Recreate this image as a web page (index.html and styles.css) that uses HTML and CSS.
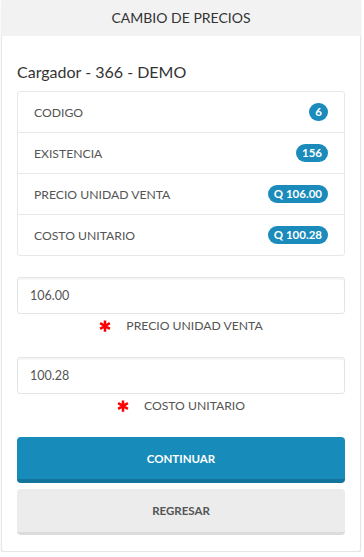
FILE: index.html
```html
<!DOCTYPE html>
<html lang="es">
  <head>
    <meta charset="UTF-8" />
    <meta name="viewport" content="width=device-width, initial-scale=1.0" />
    <title>Cambio de precios</title>
    <link rel="stylesheet" href="styles.css">
  </head>
  <body>
    <div class="panel">
      <div class="panel-heading">CAMBIO DE PRECIOS</div>
      <div class="panel-body">
        <h2 class="product-title">Cargador - 366 - DEMO</h2>

        <ul class="list-group">
          <li class="list-item">
            <span>CODIGO</span>
            <span class="badge">6</span>
          </li>
          <li class="list-item">
            <span>EXISTENCIA</span>
            <span class="badge">156</span>
          </li>
          <li class="list-item">
            <span>PRECIO UNIDAD VENTA</span>
            <span class="badge">Q 106.00</span>
          </li>
          <li class="list-item">
            <span>COSTO UNITARIO</span>
            <span class="badge">Q 100.28</span>
          </li>
        </ul>

        <div class="field">
          <input class="form-control" type="text" value="106.00">
          <label class="field-label">
            <svg class="required" viewBox="0 0 16 16" width="12" height="12">
              <path d="M8 0.5v15M1.5 4.2l13 7.6M1.5 11.8l13-7.6" stroke="#ff0000" stroke-width="3.4" fill="none"/>
            </svg>
            PRECIO UNIDAD VENTA
          </label>
        </div>

        <div class="field">
          <input class="form-control" type="text" value="100.28">
          <label class="field-label">
            <svg class="required" viewBox="0 0 16 16" width="12" height="12">
              <path d="M8 0.5v15M1.5 4.2l13 7.6M1.5 11.8l13-7.6" stroke="#ff0000" stroke-width="3.4" fill="none"/>
            </svg>
            COSTO UNITARIO
          </label>
        </div>

        <button class="btn btn-primary" type="button">CONTINUAR</button>
        <button class="btn btn-default" type="button">REGRESAR</button>
      </div>
    </div>
  </body>
</html>
```

FILE: styles.css
```css
body {
  margin: 0;
  padding: 0 3px 0 1px;
  background: #ffffff;
  font-family: Lato, "Noto Sans", sans-serif;
  color: #444;
}

.panel {
  border: 1px solid #e6e6e6;
  border-top: 0;
  border-radius: 0 0 3px 3px;
  box-shadow: 0 2px 2px rgba(0, 0, 0, 0.08);
  background: #fff;
}

.panel-heading {
  height: 36px;
  line-height: 36px;
  margin: 0 -1px;
  background: #f2f2f2;
  text-align: center;
  font-size: 14px;
  color: #333;
}

.panel-body {
  padding: 18px 15px 16px;
}

.product-title {
  margin: 8px 0 10px;
  font-size: 16px;
  font-weight: 400;
  color: #333;
}

.list-group {
  list-style: none;
  margin: 0 0 21px;
  padding: 0;
  border: 1px solid #e8e8e8;
  border-radius: 3px;
}

.list-item {
  display: flex;
  align-items: center;
  justify-content: space-between;
  height: 40px;
  padding: 0 16px;
  font-size: 12.2px;
  color: #555;
}

.list-item + .list-item {
  border-top: 1px solid #e8e8e8;
}

.badge {
  display: inline-block;
  padding: 1px 6px;
  border-radius: 9px;
  background: #1a8bbb;
  color: #fff;
  font-size: 11.5px;
  font-weight: 700;
  line-height: 16px;
  min-width: 7px;
  text-align: center;
}

.field {
  margin-bottom: 24px;
}

.form-control {
  display: block;
  box-sizing: border-box;
  width: 100%;
  height: 37px;
  padding: 0 12px;
  border: 1px solid #e4e4e4;
  border-radius: 3px;
  box-shadow: inset 0 2px 1px rgba(0, 0, 0, 0.04);
  font-family: inherit;
  font-size: 12.5px;
  color: #555;
}

.field-label {
  display: flex;
  align-items: center;
  justify-content: center;
  gap: 15px;
  margin-top: 4px;
  font-size: 12.2px;
  color: #555;
}

.required {
  display: block;
}

.btn {
  display: block;
  width: 100%;
  height: 46px;
  border: 0;
  border-radius: 4px;
  font-family: inherit;
  font-size: 11.5px;
  font-weight: 700;
}

.btn-primary {
  margin-top: 6px;
  background: #178bb9;
  border-bottom: 4px solid #13749c;
  color: #fff;
}

.btn-default {
  margin-top: 6px;
  background: #ececec;
  border-bottom: 3px solid #dcdcdc;
  color: #555;
}
```
